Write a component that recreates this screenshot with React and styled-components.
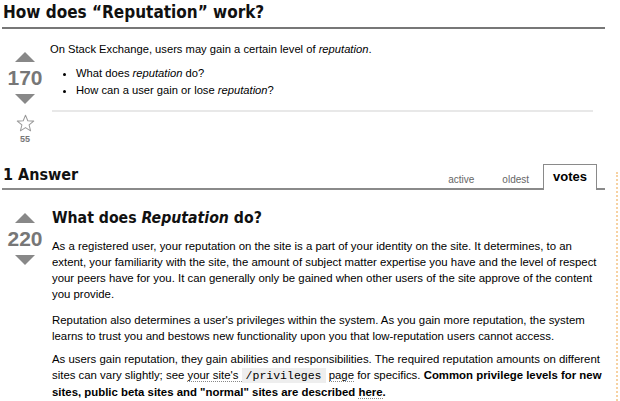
import React from 'react';
import styled, { createGlobalStyle } from 'styled-components';

const Global = createGlobalStyle`
  html, body { margin: 0; padding: 0; background: #fff; }
  body { font-family: "Liberation Sans", Arial, sans-serif; color: #000; }
`;

const Page = styled.div`
  display: flex;
  width: 620px;
  height: 401px;
  overflow: hidden;
`;

const Main = styled.main`
  width: 603px;
  padding-left: 2px;
  flex: none;
`;

const Edge = styled.div`
  margin-left: 11px;
  margin-top: 172px;
  width: 0;
  border-left: 2px dotted #f7d2a2;
`;

const Title = styled.h1`
  margin: 0;
  padding: 2px 0 5px 1px;
  font-family: "DejaVu Sans Condensed", "DejaVu Sans", sans-serif;
  font-weight: bold;
  font-size: 17px;
  line-height: 20px;
  color: #111;
  border-bottom: 2px solid #777;
`;

const PostRow = styled.div`
  display: grid;
  grid-template-columns: ${p => p.$col}px 1fr;
  margin-top: ${p => p.$top}px;
`;

const VoteCell = styled.div`
  display: flex;
  flex-direction: column;
  align-items: center;
  width: 46px;
  padding-top: ${p => p.$pad}px;
`;

const Arrow = styled.svg`
  display: block;
  width: 20px;
  height: 10px;
  margin-top: ${p => p.$mt || 0}px;
`;

const Count = styled.div`
  font-family: "Liberation Sans", Arial, sans-serif;
  font-weight: bold;
  font-size: 21px;
  line-height: 24px;
  color: #777;
  margin-top: 4px;
`;

const Star = styled.svg`
  display: block;
  width: 19px;
  height: 18px;
  margin-top: 10px;
`;

const FavCount = styled.div`
  font-size: 9px;
  font-weight: bold;
  line-height: 10px;
  color: #777;
  margin-top: 2px;
`;

const PostBody = styled.div`
  font-size: ${p => p.$fs}px;
  line-height: 16px;
  color: #000;
`;

const Para = styled.p`
  margin: ${p => p.$mt ?? 0}px 0 0;
  padding-top: ${p => p.$pt || 0}px;
  white-space: nowrap;
`;

const List = styled.ul`
  margin: 8px 0 0;
  padding-left: 26px;
  line-height: 17px;
`;

const Rule = styled.div`
  margin: 11px 12px 0 2px;
  border-top: 2px solid #e8e8e8;
`;

const AnswersHeader = styled.div`
  display: flex;
  justify-content: space-between;
  align-items: flex-end;
  margin-top: 18px;
  border-bottom: 2px solid #8a8a8a;
  height: 26px;
`;

const SubTitle = styled.h2`
  margin: 0;
  padding: 0 0 3px 1px;
  font-family: "DejaVu Sans Condensed", "DejaVu Sans", sans-serif;
  font-weight: bold;
  font-size: 16px;
  line-height: 20px;
  color: #111;
`;

const Tabs = styled.div`
  display: flex;
  align-items: flex-end;
  margin-right: 8px;
  height: 100%;
`;

const Tab = styled.div`
  font-size: ${p => (p.$active ? 13 : 10)}px;
  font-weight: ${p => (p.$active ? 'bold' : 'normal')};
  color: ${p => (p.$active ? '#000' : '#666')};
  padding: ${p => (p.$active ? '0 9px' : '0 14px 1px')};
  line-height: ${p => (p.$active ? '22px' : '14px')};
  background: #fff;
  ${p => p.$active && `
    border: 1px solid #8a8a8a;
    border-bottom: none;
    margin-bottom: -2px;
    height: 26px;
    box-sizing: border-box;
    padding-top: 1px;
  `}
`;

const Heading = styled.h3`
  margin: 0;
  font-family: "DejaVu Sans Condensed", "DejaVu Sans", sans-serif;
  font-weight: bold;
  font-size: 15.7px;
  line-height: 20px;
  color: #111;
`;

const Link = styled.a`
  color: #000;
  text-decoration: none;
  border-bottom: 1px dotted #888;
`;

const Code = styled.code`
  font-family: "Liberation Mono", "Courier New", monospace;
  font-size: 11.5px;
  background: #eee;
  padding: 1px 4px;
`;

const UpArrow = ({ mt }) => (
  <Arrow $mt={mt} viewBox="0 0 20 10">
    <polygon points="10,0 20,10 0,10" fill="#888" />
  </Arrow>
);

const DownArrow = ({ mt }) => (
  <Arrow $mt={mt} viewBox="0 0 20 10">
    <polygon points="0,0 20,0 10,10" fill="#888" />
  </Arrow>
);

export default function App() {
  return (
    <Page>
      <Global />
      <Main>
        <Title>How does “Reputation” work?</Title>

        <PostRow $col={48} $top={11}>
          <VoteCell $pad={12}>
            <UpArrow />
            <Count>170</Count>
            <DownArrow mt={4} />
            <Star viewBox="0 0 24 23">
              <polygon
                points="12,1.5 14.9,8.6 22.5,9.1 16.6,14 18.5,21.5 12,17.4 5.5,21.5 7.4,14 1.5,9.1 9.1,8.6"
                fill="none"
                stroke="#999"
                strokeWidth="1.3"
                strokeLinejoin="round"
              />
            </Star>
            <FavCount>55</FavCount>
          </VoteCell>
          <PostBody $fs={11.2}>
            <Para $pt={1}>On Stack Exchange, users may gain a certain level of <em>reputation</em>.</Para>
            <List>
              <li>What does <em>reputation</em> do?</li>
              <li>How can a user gain or lose <em>reputation</em>?</li>
            </List>
            <Rule />
          </PostBody>
        </PostRow>

        <AnswersHeader>
          <SubTitle>1 Answer</SubTitle>
          <Tabs>
            <Tab>active</Tab>
            <Tab>oldest</Tab>
            <Tab $active>votes</Tab>
          </Tabs>
        </AnswersHeader>

        <PostRow $col={50} $top={18}>
          <VoteCell $pad={5}>
            <UpArrow />
            <Count>220</Count>
            <DownArrow mt={4} />
          </VoteCell>
          <PostBody $fs={11.4}>
            <Heading>What does <em>Reputation</em> do?</Heading>
            <Para $mt={10}>
              As a registered user, your reputation on the site is a part of your identity on the site. It determines, to an<br />
              extent, your familiarity with the site, the amount of subject matter expertise you have and the level of respect<br />
              your peers have for you. It can generally only be gained when other users of the site approve of the content<br />
              you provide.
            </Para>
            <Para $mt={10}>
              Reputation also determines a user's privileges within the system. As you gain more reputation, the system<br />
              learns to trust you and bestows new functionality upon you that low-reputation users cannot access.
            </Para>
            <Para $mt={7}>
              As users gain reputation, they gain abilities and responsibilities. The required reputation amounts on different<br />
              sites can vary slightly; see <Link>your site's <Code>/privileges</Code></Link> <Link>page</Link> for specifics.{' '}
              <b>Common privilege levels for new</b><br />
              <b>sites, public beta sites and "normal" sites are described <Link>here</Link>.</b>
            </Para>
          </PostBody>
        </PostRow>
      </Main>
      <Edge />
    </Page>
  );
}
